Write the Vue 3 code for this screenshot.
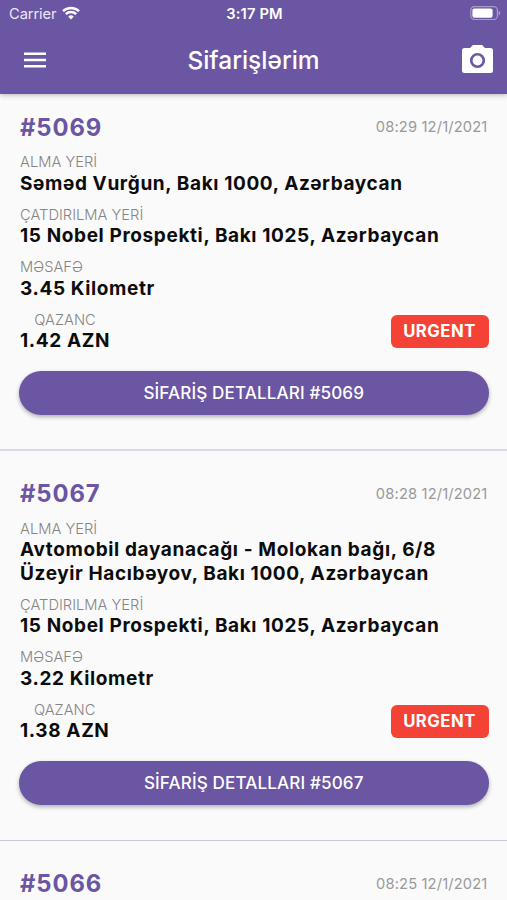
<script setup>
import { ref } from 'vue';

const title = 'Sifarişlərim';

const orders = ref([
  {
    id: 5069,
    date: '08:29 12/1/2021',
    detail: {
      pickup: ['Səməd Vurğun, Bakı 1000, Azərbaycan'],
      dropoff: '15 Nobel Prospekti, Bakı 1025, Azərbaycan',
      distance: '3.45 Kilometr',
      price: '1.42 AZN',
      urgent: true,
    },
  },
  {
    id: 5067,
    date: '08:28 12/1/2021',
    detail: {
      pickup: ['Avtomobil dayanacağı - Molokan bağı, 6/8', 'Üzeyir Hacıbəyov, Bakı 1000, Azərbaycan'],
      dropoff: '15 Nobel Prospekti, Bakı 1025, Azərbaycan',
      distance: '3.22 Kilometr',
      price: '1.38 AZN',
      urgent: true,
    },
  },
  // details not loaded yet
  { id: 5066, date: '08:25 12/1/2021', detail: null },
]);
</script>

<template>
  <div class="orders-view">
    <header class="app-header">
      <div class="status-bar">
        <div class="carrier">
          <span>Carrier</span>
          <svg class="wifi" viewBox="0 0 18 14" width="18" height="14">
            <path d="M1 5.2a11.4 11.4 0 0 1 16 0" />
            <path d="M3.8 8.2a7.4 7.4 0 0 1 10.4 0" />
            <path class="dot" d="M9 13.6 6.2 10.7a4 4 0 0 1 5.6 0z" />
          </svg>
        </div>
        <span class="clock">3:17 PM</span>
        <svg class="battery" viewBox="0 0 31 14" width="31" height="14">
          <rect class="shell" x="0.8" y="0.7" width="26.6" height="12.8" rx="3.6" />
          <rect x="2.4" y="2.4" width="20.2" height="9.4" rx="2" fill="#fff" />
          <path class="tip" d="M28.6 4.8c2.2.8 2.2 3.8 0 4.6z" />
        </svg>
      </div>

      <div class="toolbar">
        <button class="icon-btn" aria-label="Menyu">
          <svg viewBox="0 0 24 16" width="24" height="16">
            <path d="M1 .5h22v2.5H1zM1 6.7h22v2.5H1zM1 12.9h22v2.5H1z" fill="#fff" />
          </svg>
        </button>
        <h1>{{ title }}</h1>
        <button class="icon-btn" aria-label="Kamera">
          <svg viewBox="0 0 31 28" width="31" height="28">
            <path
              fill="#fff"
              fill-rule="evenodd"
              d="M10.9 0h9.2l2.8 3.1h5.6A2.5 2.5 0 0 1 31 5.600v19.800a2.500 2.500 0 0 1-2.500 2.500h-26A2.500 2.500 0 0 1 0 25.400V5.600a2.500 2.500 0 0 1 2.500-2.500h5.600zM15.500 7.900a7.600 7.600 0 1 0 0 15.200 7.600 7.600 0 0 0 0-15.200z"
            />
            <circle cx="15.5" cy="15.5" r="4.9" fill="#fff" />
          </svg>
        </button>
      </div>
    </header>

    <main class="order-list">
      <article v-for="order in orders" :key="order.id" class="order">
        <div class="order-top">
          <h2>#{{ order.id }}</h2>
          <time>{{ order.date }}</time>
        </div>

        <template v-if="order.detail">
          <div class="field">
            <span class="label">ALMA YERİ</span>
            <span v-for="line in order.detail.pickup" :key="line" class="value">{{ line }}</span>
          </div>
          <div class="field">
            <span class="label">ÇATDIRILMA YERİ</span>
            <span class="value">{{ order.detail.dropoff }}</span>
          </div>
          <div class="field">
            <span class="label">MƏSAFƏ</span>
            <span class="value">{{ order.detail.distance }}</span>
          </div>

          <div class="order-bottom">
            <div class="field earning">
              <span class="label">QAZANC</span>
              <span class="value">{{ order.detail.price }}</span>
            </div>
            <span v-if="order.detail.urgent" class="badge">URGENT</span>
          </div>

          <button class="detail-btn">SİFARİŞ DETALLARI #{{ order.id }}</button>
        </template>
      </article>
    </main>
  </div>
</template>

<style>
body {
  margin: 0;
  background: #fafafa;
  overflow: hidden;
}
</style>

<style scoped>
.orders-view {
  height: 900px;
  overflow: hidden;
  background: #fafafa;
  font-family: Inter, Roboto, 'Liberation Sans', sans-serif;
}

button {
  border: none;
  padding: 0;
  font-family: inherit;
  color: #fff;
  cursor: pointer;
}

/* --- header --- */
.app-header {
  position: relative;
  height: 93.5px;
  background: #6a56a2;
  color: #fff;
  box-shadow: 0 1px 5px rgba(0, 0, 0, 0.28);
}

.status-bar {
  display: grid;
  grid-template-columns: 1fr auto 1fr;
  align-items: center;
  height: 27px;
  padding: 0 6px 0 9px;
  font-size: 14.7px;
}

.carrier {
  display: flex;
  align-items: center;
  gap: 6px;
  color: #ece8f5;
  letter-spacing: -0.1px;
}

.wifi {
  margin-top: -2px;
}
.wifi path {
  fill: none;
  stroke: #fff;
  stroke-width: 2.5;
}
.wifi .dot { fill: #fff; stroke: none; }

.clock {
  margin-left: -1px;
  font-weight: 600;
  letter-spacing: 0.15px;
}

.battery {
  justify-self: end;
  margin-top: -1px;
}
.battery .shell {
  fill: none;
  stroke: #a79bc9;
  stroke-width: 1.2;
}
.battery .tip { fill: #a79bc9; }

.toolbar {
  display: grid;
  grid-template-columns: 1fr auto 1fr;
  align-items: center;
  height: 65px;
  padding: 0 14px 0 23px;
}

.toolbar h1 {
  margin: 0 9px 0 0;
  font-size: 24.5px;
  font-weight: 500;
}

.icon-btn {
  display: flex;
  background: none;
}
.icon-btn:last-child {
  justify-self: end;
  margin-top: -2px;
}

/* --- orders --- */
.order {
  padding: 18.5px 18.5px 35px 19px;
  border-bottom: 1px solid #c9c7d6;
}
.order:first-child {
  padding-bottom: 34px;
  border-bottom: 2px solid #dcd8ec;
}
.order + .order { padding-top: 27.7px; }

.order-top {
  display: flex;
  justify-content: space-between;
  align-items: center;
  height: 30px;
  margin-bottom: 12px;
}

.order-top h2 {
  margin: 0 0 0 1px;
  font-size: 23.8px;
  font-weight: 700;
  letter-spacing: 0.9px;
  color: #6a56a2;
}

.order-top time {
  font-size: 14.7px;
  letter-spacing: 0.15px;
  margin-right: 1px;
  color: #999;
}

.field {
  display: flex;
  flex-direction: column;
  margin: 0 0 11.6px 1px;
}

.label {
  font-size: 14.7px;
  line-height: 17.5px;
  font-weight: 300;
  color: #858585;
}

.value {
  font-size: 19px;
  line-height: 23.5px;
  font-weight: 700;
  letter-spacing: 0.62px;
  color: #0c0c0c;
  white-space: nowrap;
}

.order-bottom {
  display: flex;
  justify-content: space-between;
  align-items: center;
  margin-bottom: 18.6px;
}

.earning {
  align-items: center;
  margin-bottom: 0;
}

.badge {
  width: 98px;
  height: 33px;
  margin-top: -2px;
  border-radius: 6px;
  background: #f44336;
  color: #fff;
  font-size: 16.7px;
  font-weight: 700;
  letter-spacing: 0.5px;
  line-height: 32px;
  text-align: center;
}

.detail-btn {
  display: block;
  width: 100%;
  height: 43.5px;
  padding-bottom: 1px;
  border-radius: 22px;
  background: #6a56a2;
  font-size: 17.1px;
  font-weight: 500;
  letter-spacing: 0.12px;
  box-shadow: 0 2px 4px rgba(0, 0, 0, 0.3);
}
</style>
